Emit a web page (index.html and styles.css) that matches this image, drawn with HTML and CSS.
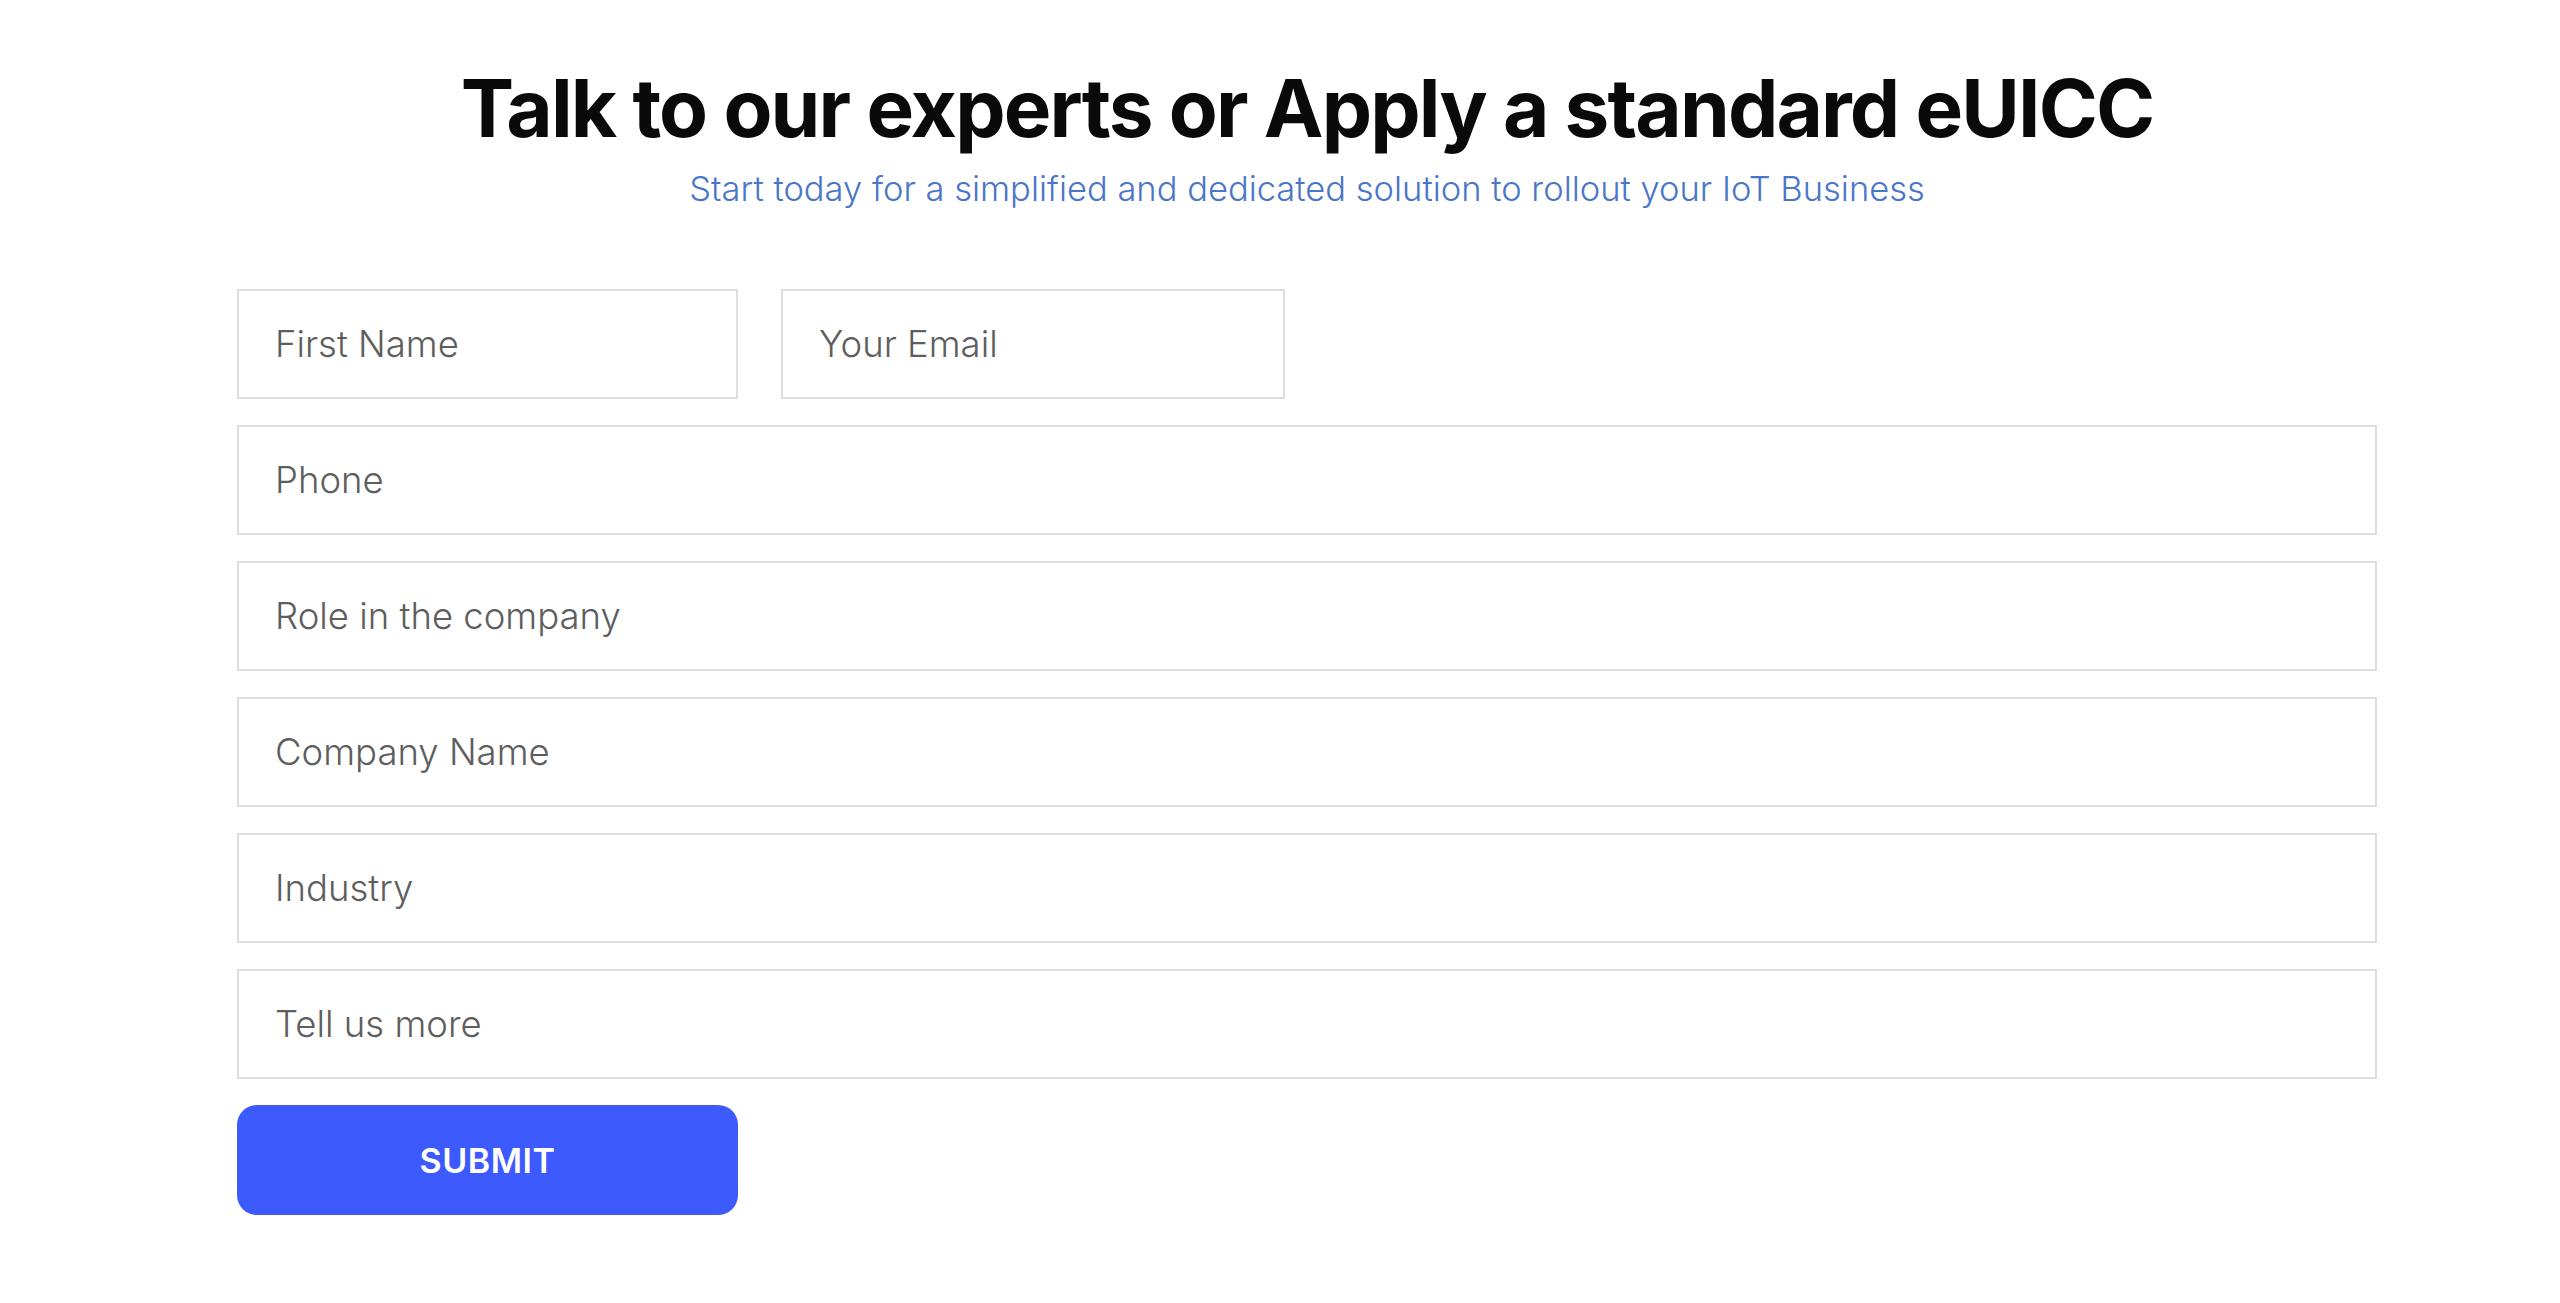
FILE: index.html
```html
<!DOCTYPE html>
<html lang="en">
<head>
<meta charset="utf-8">
<title>Talk to our experts</title>
<link rel="stylesheet" href="styles.css">
</head>
<body>
<main class="page">
  <header class="intro">
    <h1 class="title">Talk to our experts or Apply a standard eUICC</h1>
    <p class="subtitle">Start today for a simplified and dedicated solution to rollout your IoT Business</p>
  </header>
  <form class="form">
    <div class="row row-split">
      <input class="field field-name" type="text" placeholder="First Name">
      <input class="field field-email" type="email" placeholder="Your Email">
    </div>
    <input class="field" type="tel" placeholder="Phone">
    <input class="field" type="text" placeholder="Role in the company">
    <input class="field" type="text" placeholder="Company Name">
    <input class="field" type="text" placeholder="Industry">
    <input class="field" type="text" placeholder="Tell us more">
    <div class="row">
      <button class="submit" type="button">SUBMIT</button>
    </div>
  </form>
</main>
</body>
</html>
```

FILE: styles.css
```css
* { box-sizing: border-box; }
html, body { margin: 0; padding: 0; background: #ffffff; }
body { font-family: Inter, "Open Sans", "Liberation Sans", sans-serif; }
.page {
  width: 2140px;
  margin-left: 237px;
  padding-top: 60px;
}
.intro { text-align: center; }
.title {
  margin: 0;
  font-size: 80px;
  line-height: 96px;
  font-weight: 700;
  letter-spacing: -1.85px;
  color: #0a0a0a;
}
.subtitle {
  margin: 11px 0 0;
  font-size: 34.5px;
  line-height: 44px;
  font-weight: 300;
  color: #4a76c9;
}
.form {
  margin-top: 78px;
  display: flex;
  flex-direction: column;
  gap: 26px;
}
.row { display: flex; gap: 43px; }
.row-split .field-name { width: 501px; }
.row-split .field-email { width: 504px; }
.field {
  height: 110px;
  width: 100%;
  border: 2px solid #dedede;
  border-radius: 0;
  padding: 0 36px;
  font-family: Inter, "Open Sans", sans-serif;
  font-size: 36.5px;
  font-weight: 300;
  color: #333;
  background: #fff;
  outline: none;
}
.field::placeholder { color: #5e5e5e; opacity: 1; }
.submit {
  width: 501px;
  height: 110px;
  border: none;
  border-radius: 20px;
  background: #3d5afe;
  color: #ffffff;
  font-family: Inter, "Open Sans", sans-serif;
  font-size: 34px;
  font-weight: 600;
  letter-spacing: 0.5px;
}
```
